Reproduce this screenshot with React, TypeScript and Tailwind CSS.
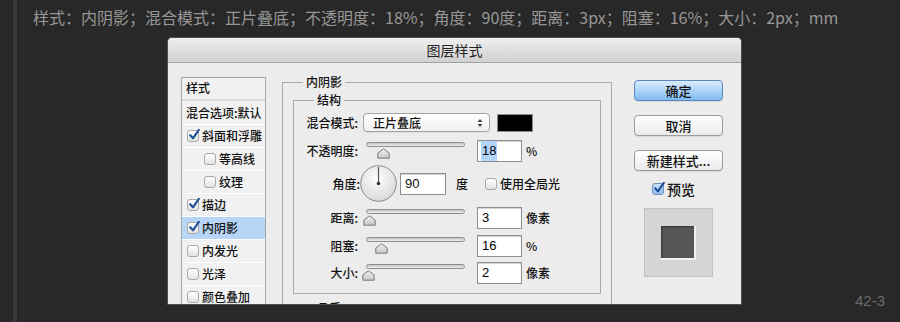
import React from 'react';

const cjk = "font-['Noto_Sans_CJK_SC',sans-serif]";

const CheckMark = ({ className = '' }: { className?: string }) => (
  <svg width="12" height="12" viewBox="0 0 12 12" className={className}>
    <path d="M2.2 6.2 L5 9.3 L10.8 0.8" fill="none" stroke="#1e4f9a" strokeWidth="2.1" strokeLinecap="round" strokeLinejoin="round" />
  </svg>
);

const Box = ({ checked, blue }: { checked?: boolean; blue?: boolean }) => (
  <div
    className={
      'relative w-[12px] h-[12px] rounded-[3px] border shrink-0 ' +
      (blue
        ? 'border-[#6d8fb8] bg-gradient-to-b from-[#c8e0f8] to-[#93c1ee]'
        : 'border-[#a9a9a9] bg-gradient-to-b from-white to-[#e3e3e3]')
    }
  >
    {checked && <CheckMark className="absolute -top-[2px] left-[0px]" />}
  </div>
);

const listItems = [
  { label: '斜面和浮雕', checked: true, indent: false },
  { label: '等高线', checked: false, indent: true },
  { label: '纹理', checked: false, indent: true },
  { label: '描边', checked: true, indent: false },
  { label: '内阴影', checked: true, indent: false, selected: true },
  { label: '内发光', checked: false, indent: false },
  { label: '光泽', checked: false, indent: false },
  { label: '颜色叠加', checked: false, indent: false },
];

const Thumb = () => (
  <svg width="13" height="11" viewBox="0 0 13 11">
    <defs>
      <linearGradient id="tg" x1="0" y1="0" x2="0" y2="1">
        <stop offset="0" stopColor="#f4f4f4" />
        <stop offset="1" stopColor="#c4c4c4" />
      </linearGradient>
    </defs>
    <path d="M6.5 0.8 L12.2 5 V10.2 H0.8 V5 Z" fill="url(#tg)" stroke="#7a7a7a" strokeWidth="1" strokeLinejoin="round" />
  </svg>
);

const Slider = ({ pos }: { pos: number }) => (
  <div className="relative w-[99px] h-[22px] shrink-0">
    <div className="mt-[4px] h-[5px] rounded-full border border-[#8e8e8e] bg-gradient-to-b from-[#c3c3c3] to-[#efefef]" />
    <div className="absolute top-[6px]" style={{ left: pos - 6 }}>
      <Thumb />
    </div>
  </div>
);

const NumInput = ({ value, highlight }: { value: string; highlight?: boolean }) => (
  <div className="w-[45px] h-[22px] shrink-0 border border-[#8f8f8f] bg-white shadow-[inset_0_1px_1px_rgba(0,0,0,0.18)] flex items-center pl-[4px] font-['Liberation_Sans',sans-serif] text-[13px] text-black">
    <span className={highlight ? 'bg-[#b4d5fb] px-[1px] -ml-[1px]' : ''}>{value}</span>
  </div>
);

const Label = ({ children }: { children: React.ReactNode }) => (
  <div className="w-[53px] shrink-0 text-right text-[12px] font-medium text-[#111]">{children}</div>
);

const SliderRow = ({ label, pos, value, unit, highlight, mt }: { label: string; pos: number; value: string; unit: string; highlight?: boolean; mt: string }) => (
  <div className={'flex items-center h-[22px] ' + mt}>
    <Label>{label}</Label>
    <div className="ml-[8px]">
      <Slider pos={pos} />
    </div>
    <div className="ml-[12px]">
      <NumInput value={value} highlight={highlight} />
    </div>
    <span className="ml-[4px] text-[12px] font-medium text-[#111]">{unit}</span>
  </div>
);

const Dial = () => (
  <svg width="37" height="37" viewBox="0 0 37 37">
    <defs>
      <radialGradient id="dg" cx="0.45" cy="0.35" r="0.7">
        <stop offset="0" stopColor="#ffffff" />
        <stop offset="1" stopColor="#d6d6d6" />
      </radialGradient>
    </defs>
    <circle cx="18.5" cy="18.5" r="17.8" fill="url(#dg)" stroke="#8a8a8a" strokeWidth="1" />
    <line x1="18.5" y1="18.5" x2="18.5" y2="2" stroke="#555" strokeWidth="1.2" />
    <circle cx="18.5" cy="18.5" r="1.8" fill="#333" />
  </svg>
);

const Btn = ({ children, primary }: { children: React.ReactNode; primary?: boolean }) => (
  <div
    className={
      'w-[89px] h-[21px] rounded-[4px] border flex items-center justify-center text-[13px] font-medium text-[#111] shadow-[0_1px_0_rgba(0,0,0,0.08)] ' +
      (primary
        ? 'border-[#5b87bf] bg-gradient-to-b from-[#d9ebfc] to-[#80bbf0]'
        : 'border-[#9c9c9c] bg-gradient-to-b from-white to-[#ebebeb]')
    }
  >
    {children}
  </div>
);

const Legend = ({ children }: { children: React.ReactNode }) => (
  <span className="absolute -top-[9px] left-[20px] bg-[#ececec] px-[3px] text-[12px] leading-[16px] font-medium text-[#111]">
    {children}
  </span>
);

export default function App() {
  return (
    <div className={'relative w-[900px] h-[322px] bg-[#282828] overflow-hidden flex ' + cjk}>
      <div className="ml-[13px] w-[4px] h-full bg-[#373737] shrink-0" />

      <div className="flex flex-col pl-[16px]">
        <p className="pt-[6px] text-[16px] leading-[22px] text-[#979797] whitespace-nowrap">
          样式：内阴影；混合模式：正片叠底；不透明度：18%；角度：90度；距离：3px；阻塞：16%；大小：2px；mm
        </p>

        {/* dialog */}
        <div className="ml-[134px] mt-[9px] w-[575px] h-[268px] border border-[#4c4c4c] rounded-t-[5px] overflow-hidden flex flex-col bg-[#ececec] shrink-0">
          <div className="h-[25px] shrink-0 border-b border-[#a2a2a2] bg-gradient-to-b from-[#efefef] to-[#d1d1d1] flex items-center justify-center text-[14px] text-[#222]">
            图层样式
          </div>

          <div className="flex pl-[13px] pt-[14px] text-[#111]">
            {/* left list */}
            <div className="w-[85px] shrink-0 border border-[#a6a6a6] bg-[#f1f1f1] h-[260px] text-[12px] font-medium">
              <div className="h-[23px] pl-[4px] pt-[1px] border-b-2 border-[#d9d9d9]">样式</div>
              <div className="h-[24px] pl-[4px] flex items-center border-b border-white">混合选项:默认</div>
              {listItems.map((it) => (
                <div
                  key={it.label}
                  className={
                    'h-[23px] flex items-center border-b border-white ' +
                    (it.indent ? 'pl-[22px] ' : 'pl-[5px] ') +
                    (it.selected ? 'bg-[#b7d5f6]' : '')
                  }
                >
                  <Box checked={it.checked} />
                  <span className="ml-[3px] whitespace-nowrap">{it.label}</span>
                </div>
              ))}
            </div>

            {/* 内阴影 group */}
            <div className="relative ml-[16px] mt-[5px] w-[330px] h-[300px] shrink-0 border border-[#aaaaaa] pl-[10px] pt-[17px]">
              <Legend>内阴影</Legend>

              <div className="relative w-[308px] h-[194px] border border-[#aaaaaa] pl-[11px]">
                <Legend>结构</Legend>

                <div className="flex items-center h-[19px] mt-[12px]">
                  <Label>混合模式:</Label>
                  <div className="ml-[5px] w-[127px] h-[19px] rounded-[4px] border border-[#a4a4a4] bg-gradient-to-b from-white to-[#f0f0f0] flex items-center justify-between pl-[9px] pr-[6px] text-[12px] font-medium shadow-[0_1px_0_rgba(0,0,0,0.06)]">
                    <span>正片叠底</span>
                    <svg width="6" height="10" viewBox="0 0 6 10">
                      <path d="M0.5 4 L3 1 L5.5 4 Z M0.5 6 L3 9 L5.5 6 Z" fill="#444" />
                    </svg>
                  </div>
                  <div className="ml-[7px] w-[36px] h-[18px] bg-black border border-[#8a8a8a]" />
                </div>

                <SliderRow label="不透明度:" pos={17} value="18" unit="%" highlight mt="mt-[8px]" />

                <div className="flex items-center h-[37px] mt-[3px]">
                  <div className="w-[55px] shrink-0 text-right text-[12px] font-medium">角度:</div>
                  <div className="ml-[0px]">
                    <Dial />
                  </div>
                  <div className="ml-[3px] w-[46px] h-[22px] border border-[#8f8f8f] bg-white shadow-[inset_0_1px_1px_rgba(0,0,0,0.18)] flex items-center pl-[4px] font-['Liberation_Sans',sans-serif] text-[13px]">
                    90
                  </div>
                  <span className="ml-[10px] text-[12px] font-medium">度</span>
                  <div className="ml-[17px]">
                    <Box />
                  </div>
                  <span className="ml-[3px] text-[12px] font-medium">使用全局光</span>
                </div>

                <SliderRow label="距离:" pos={3} value="3" unit="像素" mt="mt-[5px]" />
                <SliderRow label="阻塞:" pos={15} value="16" unit="%" mt="mt-[6px]" />
                <SliderRow label="大小:" pos={2} value="2" unit="像素" mt="mt-[5px]" />
              </div>

              <div className="relative mt-[14px] w-[308px] h-[60px] border border-[#aaaaaa]">
                <Legend>品质</Legend>
              </div>
            </div>

            {/* right column */}
            <div className="ml-[22px] mt-[3px] flex flex-col">
              <Btn primary>确定</Btn>
              <div className="mt-[14px]">
                <Btn>取消</Btn>
              </div>
              <div className="mt-[14px]">
                <Btn>新建样式...</Btn>
              </div>
              <div className="mt-[9px] ml-[18px] h-[18px] flex items-center">
                <Box checked blue />
                <span className="ml-[3px] text-[14px] font-medium">预览</span>
              </div>
              <div className="mt-[10px] ml-[10px] w-[69px] h-[69px] bg-[#d5d5d5] border border-[#c2c2c2] flex items-center justify-center">
                <div className="w-[35px] h-[34px] bg-[#565656] border-r-[2px] border-b-[2px] border-[#f2f2f2] shadow-[inset_1px_1px_2px_rgba(0,0,0,0.4)]" />
              </div>
            </div>
          </div>
        </div>
      </div>

      <span className="absolute right-[15px] bottom-[12px] text-[15px] leading-[18px] text-[#6b6b6b] font-['Liberation_Sans',sans-serif]">
        42-3
      </span>
    </div>
  );
}
